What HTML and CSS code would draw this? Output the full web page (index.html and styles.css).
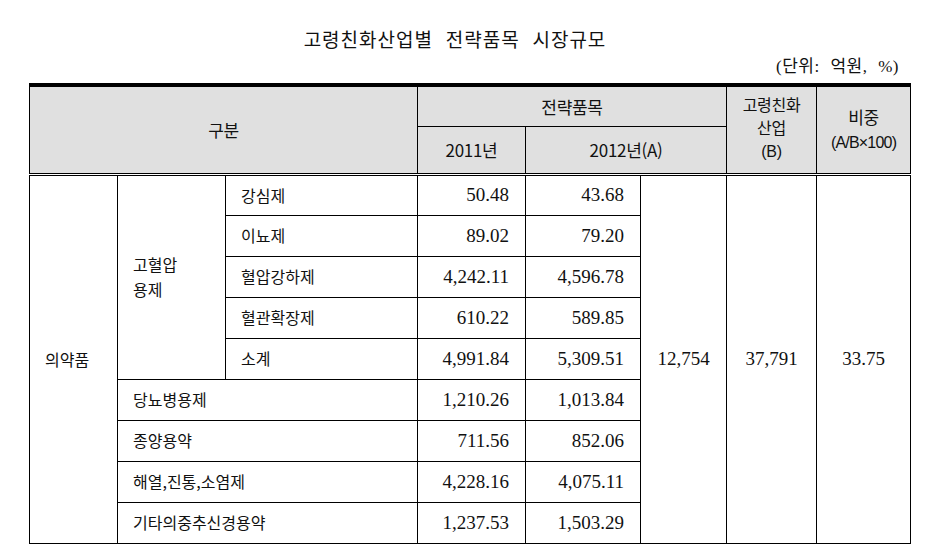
FILE: index.html
```html
<!DOCTYPE html>
<html lang="ko">
<head>
<meta charset="utf-8">
<title>고령친화산업별 전략품목 시장규모</title>
<link rel="stylesheet" href="styles.css">
</head>
<body>
<div class="page">
  <div class="title">고령친화산업별 전략품목 시장규모</div>
  <div class="unit">(단위: 억원, %)</div>
  <table class="grid">
    <colgroup>
      <col class="c1"><col class="c2"><col class="c3"><col class="c4">
      <col class="c5"><col class="c6"><col class="c7"><col class="c8">
    </colgroup>
    <thead>
      <tr class="h1">
        <th colspan="3" rowspan="2" class="hd">구분</th>
        <th colspan="3">전략품목</th>
        <th rowspan="2" class="hd lines">고령친화<br>산업<br><span class="latin">(B)</span></th>
        <th rowspan="2" class="hd ratio">비중<br><span class="small">(A/B×100)</span></th>
      </tr>
      <tr class="h2">
        <th class="hd">2011년</th>
        <th colspan="2" class="hd">2012년(A)</th>
      </tr>
    </thead>
    <tbody>
      <tr>
        <td rowspan="9" class="lbl">의약품</td>
        <td rowspan="5" class="lbl group">고혈압<br>용제</td>
        <td class="lbl">강심제</td>
        <td class="num">50.48</td>
        <td class="num">43.68</td>
        <td rowspan="9" class="num mid">12,754</td>
        <td rowspan="9" class="num mid">37,791</td>
        <td rowspan="9" class="num mid">33.75</td>
      </tr>
      <tr><td class="lbl">이뇨제</td><td class="num">89.02</td><td class="num">79.20</td></tr>
      <tr><td class="lbl">혈압강하제</td><td class="num">4,242.11</td><td class="num">4,596.78</td></tr>
      <tr><td class="lbl">혈관확장제</td><td class="num">610.22</td><td class="num">589.85</td></tr>
      <tr><td class="lbl">소계</td><td class="num">4,991.84</td><td class="num">5,309.51</td></tr>
      <tr><td colspan="2" class="lbl">당뇨병용제</td><td class="num">1,210.26</td><td class="num">1,013.84</td></tr>
      <tr><td colspan="2" class="lbl">종양용약</td><td class="num">711.56</td><td class="num">852.06</td></tr>
      <tr><td colspan="2" class="lbl">해열,진통,소염제</td><td class="num">4,228.16</td><td class="num">4,075.11</td></tr>
      <tr><td colspan="2" class="lbl">기타의중추신경용약</td><td class="num">1,237.53</td><td class="num">1,503.29</td></tr>
    </tbody>
  </table>
</div>
</body>
</html>
```

FILE: styles.css
```css
html, body {
  margin: 0;
  padding: 0;
  background: #ffffff;
}

.page {
  width: 882px;
  padding: 28px 0 0 29px;
  color: #111;
}

.title {
  font-family: "Liberation Serif", "Noto Sans CJK KR", serif;
  font-size: 19px;
  line-height: 26px;
  height: 26px;
  letter-spacing: 1px;
  word-spacing: 7px;
  text-align: center;
  padding-right: 30px;
}

.unit {
  font-family: "Liberation Serif", "Noto Sans CJK KR", serif;
  font-size: 17px;
  line-height: 22px;
  margin-top: 2px;
  margin-bottom: 5px;
  text-align: right;
  padding-right: 12px;
  letter-spacing: 0.5px;
  word-spacing: 6px;
}

.grid {
  border-collapse: collapse;
  table-layout: fixed;
  width: 881px;
  border-bottom: 1px solid #000;
}

.c1 { width: 88px; }
.c2 { width: 108px; }
.c3 { width: 192px; }
.c4 { width: 108px; }
.c5 { width: 115px; }
.c6 { width: 86px; }
.c7 { width: 90px; }
.c8 { width: 94px; }

.grid th,
.grid td {
  border: 1px solid #000;
  padding: 0;
}

.grid th {
  background: #e0e0e0;
  font-family: "Noto Sans CJK KR", sans-serif;
  font-weight: normal;
  font-size: 17px;
  letter-spacing: -0.3px;
  text-align: center;
  vertical-align: middle;
  color: #111;
}

.grid thead .h1 th {
  border-top: 4px solid #000;
}

.h1 { height: 41px; }
.h2 { height: 48px; }

.grid thead .hd {
  border-bottom: 3px double #000;
}

.grid th.lines {
  font-size: 16px;
  line-height: 23px;
  padding-bottom: 4px;
}

.latin {
  font-family: "Liberation Sans", sans-serif;
  font-size: 16px;
}

.grid th.ratio {
  line-height: 24px;
}

.small {
  font-family: "Liberation Sans", sans-serif;
  font-size: 16px;
  letter-spacing: -0.8px;
}

.grid tbody tr {
  height: 41px;
}

.grid td.lbl {
  font-family: "Noto Sans CJK KR", sans-serif;
  font-size: 16px;
  text-align: left;
  vertical-align: middle;
  padding-left: 15px;
  line-height: 25px;
}

.grid td.num {
  font-family: "Liberation Serif", serif;
  font-size: 19px;
  text-align: right;
  padding-right: 16px;
  vertical-align: middle;
}

.grid td.mid {
  text-align: center;
  padding-right: 0;
}
```
